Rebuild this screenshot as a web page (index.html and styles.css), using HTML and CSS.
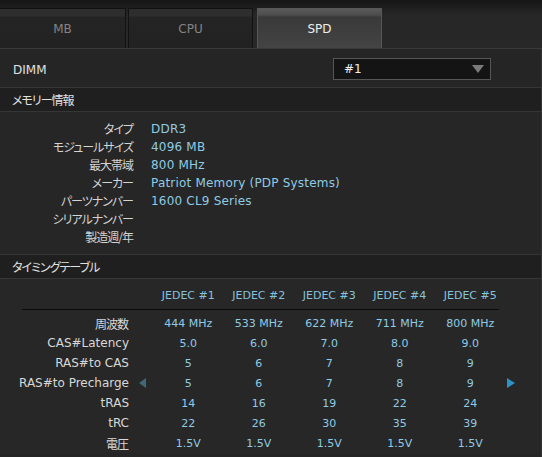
FILE: index.html
```html
<!DOCTYPE html>
<html lang="ja">
<head>
    <meta charset="UTF-8">
    <title>SPD</title>
    <link rel="stylesheet" href="styles.css">
</head>
<body>
<div class="tabs">
    <div class="tab">MB</div>
    <div class="tab">CPU</div>
    <div class="tab tab_active">SPD</div>
</div>

<div class="panel">
    <div class="dimm_row">
        <span class="dimm_label">DIMM</span>
        <div class="select">
            <span>#1</span>
            <span class="select_arrow"></span>
        </div>
    </div>

    <div class="section_head">メモリー情報</div>
    <div class="info">
        <div class="info_row"><span class="info_label">タイプ</span><span class="value">DDR3</span></div>
        <div class="info_row"><span class="info_label">モジュールサイズ</span><span class="value">4096 MB</span></div>
        <div class="info_row"><span class="info_label">最大帯域</span><span class="value">800 MHz</span></div>
        <div class="info_row"><span class="info_label">メーカー</span><span class="value">Patriot Memory (PDP Systems)</span></div>
        <div class="info_row"><span class="info_label">パーツナンバー</span><span class="value">1600 CL9 Series</span></div>
        <div class="info_row"><span class="info_label">シリアルナンバー</span><span class="value"></span></div>
        <div class="info_row"><span class="info_label">製造週/年</span><span class="value"></span></div>
    </div>

    <div class="section_head">タイミングテーブル</div>
    <div class="timing">
        <div class="t_row t_head">
            <span></span><span></span>
            <span>JEDEC #1</span><span>JEDEC #2</span><span>JEDEC #3</span><span>JEDEC #4</span><span>JEDEC #5</span>
            <span></span>
        </div>
        <div class="t_line"></div>
        <div class="t_row">
            <span class="t_label jp">周波数</span><span></span>
            <span>444 MHz</span><span>533 MHz</span><span>622 MHz</span><span>711 MHz</span><span>800 MHz</span>
            <span></span>
        </div>
        <div class="t_row">
            <span class="t_label">CAS#Latency</span><span></span>
            <span>5.0</span><span>6.0</span><span>7.0</span><span>8.0</span><span>9.0</span>
            <span></span>
        </div>
        <div class="t_row">
            <span class="t_label">RAS#to CAS</span><span></span>
            <span>5</span><span>6</span><span>7</span><span>8</span><span>9</span>
            <span></span>
        </div>
        <div class="t_row">
            <span class="t_label">RAS#to Precharge</span><span class="arrow_left"></span>
            <span>5</span><span>6</span><span>7</span><span>8</span><span>9</span>
            <span class="arrow_right"></span>
        </div>
        <div class="t_row">
            <span class="t_label">tRAS</span><span></span>
            <span>14</span><span>16</span><span>19</span><span>22</span><span>24</span>
            <span></span>
        </div>
        <div class="t_row">
            <span class="t_label">tRC</span><span></span>
            <span>22</span><span>26</span><span>30</span><span>35</span><span>39</span>
            <span></span>
        </div>
        <div class="t_row">
            <span class="t_label jp">電圧</span><span></span>
            <span>1.5V</span><span>1.5V</span><span>1.5V</span><span>1.5V</span><span>1.5V</span>
            <span></span>
        </div>
    </div>
</div>
</body>
</html>
```

FILE: styles.css
```css
body {
    margin: 0;
    width: 542px;
    height: 457px;
    overflow: hidden;
    background: #272727;
    color: #d6d6d6;
    font-family: "DejaVu Sans", "Noto Sans CJK JP", sans-serif;
    font-size: 12px;
    font-feature-settings: "palt";
}

.tabs {
    display: flex;
    align-items: flex-end;
    gap: 2px;
    height: 48px;
    box-sizing: border-box;
    padding-top: 8px;
    background: linear-gradient(#161616, #262626 30%, #282828);
}

.tab {
    width: 125px;
    height: 40px;
    box-sizing: border-box;
    border: 1px solid #121212;
    border-bottom: none;
    background: linear-gradient(#2e2e2e 0, #2e2e2e 7px, #242424 8px, #222222);
    color: #848484;
    text-align: center;
    line-height: 40px;
    font-size: 12px;
}

.tab:first-child {
    width: 126px;
    border-left: none;
}

.tab_active {
    margin-left: 2px;
    border: 1px solid #575757;
    border-bottom: none;
    background: linear-gradient(#5a5a5a 0, #4d4d4d 6px, #393939 8px, #444444);
    color: #eeeeee;
}

.panel {
    border-top: 1px solid #3a3a3a;
    border-right: 1px solid #333333;
    height: 408px;
    background: #252525;
}

.dimm_row {
    display: flex;
    align-items: center;
    justify-content: space-between;
    height: 38px;
    padding: 0 50px 0 13px;
    border-bottom: 1px solid #363636;
}

.dimm_label {
    color: #e0e0e0;
    padding-top: 4px;
}

.select {
    display: flex;
    align-items: center;
    justify-content: space-between;
    box-sizing: border-box;
    width: 158px;
    height: 22px;
    margin-top: 1px;
    padding: 0 6px 0 10px;
    border: 1px solid #565656;
    background: #141414;
    color: #f0f0f0;
}

.select_arrow {
    width: 0;
    height: 0;
    border-left: 6px solid transparent;
    border-right: 6px solid transparent;
    border-top: 8px solid #7a7a7a;
}

.section_head {
    height: 23px;
    line-height: 23px;
    padding-left: 12px;
    background: #1f1f1f;
    border-bottom: 1px solid #363636;
    color: #e2e2e2;
    font-family: "Noto Sans CJK JP", sans-serif;
    font-size: 12px;
    letter-spacing: -1px;
}

.info {
    padding: 8px 0 8px;
    border-bottom: 1px solid #363636;
    background: #262626;
}

.info_row {
    display: flex;
    height: 18px;
    line-height: 18px;
}

.info_label {
    width: 133px;
    text-align: right;
    font-family: "Noto Sans CJK JP", sans-serif;
    font-size: 12px;
    letter-spacing: -1px;
    color: #d4d4d4;
}

.value {
    margin-left: 18px;
    color: #8fcbe4;
    letter-spacing: 0.2px;
}

.timing {
    padding-top: 7px;
    background: #272727;
}

.t_row {
    display: grid;
    grid-template-columns: 130px 23px repeat(5, 70.5px) 1fr;
    align-items: center;
    height: 20px;
    text-align: center;
    color: #8fcbe4;
    font-size: 11px;
}

.t_head {
    height: 18px;
    margin-bottom: 5px;
    color: #86c3de;
}

.t_line {
    width: 477px;
    height: 1px;
    margin: 0 0 3px 22px;
    background: #0c0c0c;
}

.t_row .t_label {
    text-align: right;
    padding-right: 1px;
    color: #d8d8d8;
    font-size: 12px;
}

.t_row .jp {
    letter-spacing: -1px;
    padding-right: 2px;
}

.arrow_left {
    justify-self: center;
    width: 0;
    height: 0;
    margin-left: 1px;
    border-top: 5px solid transparent;
    border-bottom: 5px solid transparent;
    border-right: 7px solid #3f6878;
}

.arrow_right {
    justify-self: start;
    width: 0;
    height: 0;
    margin-left: 1px;
    border-top: 5px solid transparent;
    border-bottom: 5px solid transparent;
    border-left: 8px solid #2a93c4;
}
```
